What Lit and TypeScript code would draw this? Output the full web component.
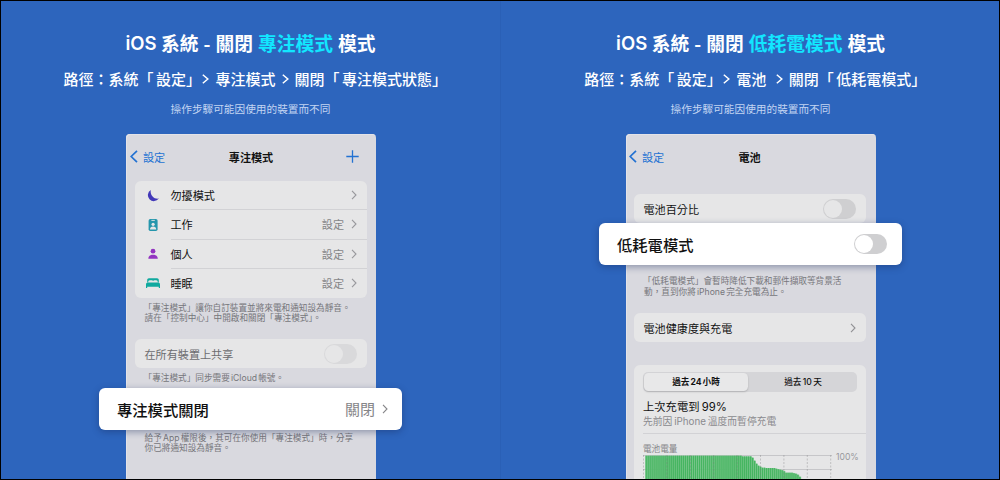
import {LitElement, html, css, svg, nothing} from 'lit';
import {customElement, property} from 'lit/decorators.js';

const chevron = html`
  <svg class="chevron" viewBox="0 0 6 10" width="6" height="10">
    <path d="M1 .8 5 5 1 9.2" fill="none" stroke="currentColor" stroke-width="1.1" />
  </svg>
`;

const icons: Record<string, unknown> = {
  moon: svg`<path fill="#4238b8" d="M4.8 1A6 6 0 1 0 12.8 9.6C8 10.6 3.8 6.2 4.8 1Z" />`,
  badge: svg`
    <rect x="2.6" y="1" width="9" height="12" rx="1.7" fill="#2596ac" />
    <path fill="#e6e6e7" d="M5.4 1.9h3.4v.9H5.4z" />
    <circle cx="7.1" cy="6.3" r="1.6" fill="#e6e6e7" />
    <path fill="#e6e6e7" d="M4 11.4c0-2.1 1.2-3 3.1-3s3.1.9 3.1 3z" />
  `,
  person: svg`
    <circle cx="7" cy="4.2" r="2.4" fill="#9234c0" />
    <path fill="#9234c0" d="M2.3 11.8c0-2.7 1.8-4 4.7-4s4.8 1.3 4.8 4z" />
  `,
  bed: svg`
    <path fill="#10a99f" d="M1.2 6.4V4c0-1 .7-1.7 1.7-1.7h8.2c1 0 1.7.7 1.7 1.7v2.4h-1c0-1.5-.5-2.2-1.6-2.2H8.4c-.7 0-1.1.3-1.3.9-.2-.6-.6-.9-1.3-.9H3.8c-1.1 0-1.6.7-1.6 2.2z" />
    <path fill="#10a99f" d="M0 12V8.6C0 7.5.7 6.6 1.8 6.6h10.4c1.1 0 1.8.9 1.8 2V12h-1.2v-1.3H1.2V12z" />
  `,
};

@customElement('app-toggle')
export class AppToggle extends LitElement {
  static styles = css`
    :host {
      display: block;
      flex: none;
      width: 33px;
      height: 20px;
    }
    .track {
      box-sizing: border-box;
      width: 33px;
      height: 20px;
      padding: 1px;
      border-radius: 10px;
      background: var(--track, #cfcfd1);
    }
    .knob {
      width: 18px;
      height: 18px;
      border-radius: 50%;
      background: var(--knob, #e6e6e7);
    }
  `;
  render() {
    return html`<div class="track"><div class="knob"></div></div>`;
  }
}

@customElement('guide-panel')
export class GuidePanel extends LitElement {
  static styles = css`
    :host {
      display: flex;
      flex-direction: column;
      align-items: center;
      box-sizing: border-box;
      height: 478px;
      padding-top: 27.5px;
      overflow: hidden;
    }
    .title,
    .path,
    .hint {
      flex: none;
      margin-right: 1px;
    }
    .title,
    .path {
      display: flex;
      align-items: center;
      white-space: pre;
      color: #fff;
    }
    .title {
      height: 28px;
      font-size: 18.75px;
      font-weight: 700;
    }
    .title .latin {
      font-family: 'Inter', sans-serif;
      font-size: 18.5px;
      font-weight: 600;
      margin-right: 4.5px;
    }
    .title .dash {
      width: 17px;
      text-align: center;
    }
    .title .accent {
      margin: 0 5px;
      color: #12e6ff;
    }
    .path {
      height: 24px;
      margin-top: 9.5px;
      font-size: 15px;
      font-weight: 500;
    }
    .hint {
      height: 16px;
      margin-top: 11px;
      font-size: 10.67px;
      line-height: 16px;
      color: #c3d5f2;
    }
    .phone {
      box-sizing: border-box;
      width: 250px;
      flex: 1 1 0;
      min-height: 0;
      margin-top: 17px;
      border-radius: 4px 4px 0 0;
      background: #d9d9df;
      box-shadow: inset 1px 1px 0 #e3e3e8;
    }
  `;

  @property() mode = '';

  render() {
    return html`
      <div class="title">
        <span class="latin">iOS</span><span>系統</span><span class="dash">-</span>
        <span>關閉</span><span class="accent">${this.mode}</span><span>模式</span>
      </div>
      <div class="path"><slot name="path"></slot></div>
      <div class="hint">操作步驟可能因使用的裝置而不同</div>
      <div class="phone"><slot></slot></div>
    `;
  }
}

@customElement('app-root')
export class AppRoot extends LitElement {
  static styles = css`
    :host {
      display: grid;
      grid-template-columns: 500px 500px;
      box-sizing: border-box;
      width: 1000px;
      height: 480px;
      border: 1px solid #000;
      overflow: hidden;
      background: #2d65bd;
      color: #111;
      font-family: 'Noto Sans CJK TC', sans-serif;
    }
    .left {
      box-shadow: inset -1px 0 0 #2a60b6;
    }
    .path {
      display: flex;
      align-items: center;
      white-space: pre;
    }
    .path svg {
      flex: none;
      margin: 1px 6px 0;
    }
    .quoted {
      margin: 0 0 0 2.5px;
    }
    .tight {
      margin-right: -4.5px;
    }
    .last {
      margin-right: -9.5px;
    }
    .nav {
      display: grid;
      grid-template-columns: 1fr auto 1fr;
      align-items: center;
      height: 45px;
      padding: 0 4px;
      font-size: 11.1px;
    }
    .back {
      display: flex;
      align-items: center;
      gap: 5px;
      color: #2372d2;
    }
    .nav .name {
      font-weight: 700;
    }
    .right .nav {
      padding: 0 6px 0 3px;
    }
    .plus {
      justify-self: end;
      margin-right: 13px;
    }
    .card {
      box-sizing: border-box;
      width: 232px;
      margin-left: 9px;
      border-radius: 6px;
      background: #e6e6e7;
    }
    .nav + .card {
      margin-top: 2px;
    }
    .right .card {
      margin-left: 8px;
    }
    .right .nav + .card {
      margin-top: 15px;
    }
    .row {
      display: flex;
      align-items: center;
      height: 29.25px;
      font-size: 11.1px;
    }
    .row .icon {
      width: 14px;
      margin: 0 10.5px 0 11px;
    }
    .row .body {
      display: flex;
      flex: 1;
      align-items: center;
      box-sizing: border-box;
      height: 100%;
      padding-right: 10px;
      border-bottom: 1px solid #d2d2d5;
    }
    .row:last-child .body {
      border-bottom-color: transparent;
    }
    .body .value {
      margin-left: auto;
      color: #858588;
    }
    .body .chevron {
      margin-left: 7px;
      color: #98989c;
    }
    .single {
      justify-content: space-between;
      padding: 0 10px 0 9.5px;
      box-sizing: border-box;
    }
    .single .chevron {
      color: #909094;
    }
    .dim {
      color: #6d6d70;
      --track: #d9d9db;
      --knob: #e6e6e7;
    }
    .note {
      padding-left: 18.5px;
      font-size: 8.65px;
      line-height: 10.6px;
      color: #76767b;
      white-space: pre;
      word-spacing: -1.2px;
      font-family: 'Inter', 'Noto Sans CJK TC', sans-serif;
    }
    .right .note {
      padding-left: 18px;
    }
    .open {
      margin-left: -1px;
    }
    .callout {
      display: flex;
      align-items: center;
      justify-content: space-between;
      position: relative;
      box-sizing: border-box;
      width: 302.5px;
      height: 42px;
      margin-left: -27px;
      padding: 0 13.5px 0 18px;
      border-radius: 6px;
      background: #fff;
      box-shadow: 0 2px 7px rgba(20, 40, 90, 0.4);
      font-size: 15.3px;
      font-weight: 500;
      --track: #cfcfd1;
      --knob: #fff;
    }
    .right .callout {
      padding-right: 15px;
    }
    .callout .state {
      display: flex;
      align-items: center;
      gap: 7px;
      font-weight: 400;
      font-size: 15px;
      color: #858588;
    }
    .usage {
      height: 120px;
      border-radius: 6px 6px 0 0;
      padding: 7px 0 0 9px;
      font-family: 'Inter', 'Noto Sans CJK TC', sans-serif;
      word-spacing: -1px;
    }
    .segments {
      display: grid;
      grid-template-columns: 1fr 1fr;
      box-sizing: border-box;
      width: 214px;
      height: 20px;
      padding: 1px;
      border-radius: 5px;
      background: #d5d5d8;
      font-size: 8.6px;
      font-weight: 500;
      line-height: 18px;
      text-align: center;
    }
    .segments .active {
      width: 104px;
      border-radius: 4.5px;
      background: #e8e8e9;
      box-shadow: 0 1px 2px rgba(0, 0, 0, 0.18);
      font-weight: 700;
    }
    .charged {
      margin-top: 8px;
      font-size: 11.3px;
      line-height: 15px;
    }
    .reason {
      font-size: 9.8px;
      line-height: 14px;
      color: #8a8a8e;
    }
    .rule {
      height: 1px;
      margin-top: 4px;
      background: #d2d2d5;
    }
    .level {
      margin-top: 9px;
      font-size: 8.6px;
      line-height: 13px;
      color: #858588;
    }
    .chart {
      display: flex;
      gap: 4px;
      margin-top: -1px;
      font-size: 8.6px;
      line-height: 4px;
      color: #98989c;
    }
    .chart svg {
      flex: none;
    }
  `;

  modes = [
    {icon: 'moon', name: '勿擾模式', value: ''},
    {icon: 'badge', name: '工作', value: '設定'},
    {icon: 'person', name: '個人', value: '設定'},
    {icon: 'bed', name: '睡眠', value: '設定'},
  ];

  // distance of each bar top from the 100% line
  drops = [
    ...Array(49).fill(0),
    ...Array(5).fill(0.7),
    2, 5, 8, 10, 11, 12, 12, 12.3, 12.3, 12.3, 12.3, 12.3, 13, 13.5, 14, 14.5, 15.5, 17, 17, 17, 17, 17.5, 18, 19, 21,
  ];

  arrow() {
    return html`
      <svg width="7" height="10" viewBox="0 0 7 10">
        <path d="M.8.8 5.8 5 .8 9.2" fill="none" stroke="#fff" stroke-width="1.5" />
      </svg>
    `;
  }

  nav(name: string, plus = false) {
    return html`
      <div class="nav">
        <div class="back">
          <svg width="8" height="13" viewBox="0 0 8 13">
            <path d="M7 .8 1.2 6.5 7 12.2" fill="none" stroke="#2372d2" stroke-width="1.7" />
          </svg>
          設定
        </div>
        <div class="name">${name}</div>
        ${plus
          ? html`<svg class="plus" width="13" height="13" viewBox="0 0 13 13">
              <path d="M6.5.3v12.4M.3 6.5h12.4" stroke="#2372d2" stroke-width="1.3" />
            </svg>`
          : nothing}
      </div>
    `;
  }

  chart() {
    const grid = [0, 1, 2, 3, 4, 5, 6, 7, 8].map((i) => 0.5 + i * 23.4);
    return html`
      <svg width="189" height="24" viewBox="0 0 189 24">
        <path d="M0 .5h189M0 14.5h189" stroke="#c6c6c9" />
        ${this.drops.map(
          (d, i) => svg`
            <rect x=${2.5 + i * 1.97} y=${0.7 + d} width="2" height="24" fill="#7ac68b" />
            <rect x=${2.5 + i * 1.97} y=${0.7 + d} width="1.3" height="24" fill="#45b560" />
          `
        )}
        ${grid.map(
          (x) => svg`<path d="M${x} 0v24" stroke="#77777c" stroke-opacity=".35" stroke-dasharray="2 1.5" />`
        )}
      </svg>
      <span>100%</span>
    `;
  }

  render() {
    return html`
      <guide-panel class="left" mode="專注模式">
        <div class="path" slot="path"><span>路徑：系統「</span><span class="quoted">設定</span><span class="tight">」</span>${this.arrow()}<span>專注模式</span>${this.arrow()}<span>關閉「</span><span class="quoted">專注模式狀態</span><span class="last">」</span></div>
        ${this.nav('專注模式', true)}
        <div class="card">
          ${this.modes.map(
            (m) => html`
              <div class="row">
                <svg class="icon" width="14" height="14" viewBox="0 0 14 14">${icons[m.icon]}</svg>
                <div class="body">
                  <span>${m.name}</span>
                  <span class="value">${m.value}</span>
                  ${chevron}
                </div>
              </div>
            `
          )}
        </div>
        <div class="note" style="padding-top:4.5px"><div class="open">「專注模式」讓你自訂裝置並將來電和通知設為靜音。</div>請在「控制中心」中開啟和關閉「專注模式」。</div>
        <div class="card" style="margin-top:15.5px">
          <div class="row single dim">在所有裝置上共享<app-toggle></app-toggle></div>
        </div>
        <div class="note" style="padding-top:4.5px"><div class="open">「專注模式」同步需要 iCloud 帳號。</div></div>
        <div class="callout" style="margin-top:4px">
          專注模式關閉<span class="state">關閉${chevron}</span>
        </div>
        <div class="note" style="padding-top:3px">給予 App 權限後，其可在你使用「專注模式」時，分享
你已將通知設為靜音。</div>
      </guide-panel>

      <guide-panel class="right" mode="低耗電模式">
        <div class="path" slot="path"><span>路徑：系統「</span><span class="quoted">設定</span><span class="tight">」</span>${this.arrow()}<span>電池 </span>${this.arrow()}<span>關閉「</span><span class="quoted">低耗電模式</span><span class="last">」</span></div>
        ${this.nav('電池')}
        <div class="card">
          <div class="row single">電池百分比<app-toggle></app-toggle></div>
        </div>
        <div class="callout">
          低耗電模式<app-toggle></app-toggle>
        </div>
        <div class="note" style="padding-top:11px"><div class="open">「低耗電模式」會暫時降低下載和郵件擷取等背景活</div>動，直到你將 iPhone 完全充電為止。</div>
        <div class="card" style="margin-top:15.5px">
          <div class="row single">電池健康度與充電${chevron}</div>
        </div>
        <div class="card usage" style="margin-top:22.5px">
          <div class="segments"><span class="active">過去 24 小時</span><span>過去 10 天</span></div>
          <div class="charged">上次充電到 99%</div>
          <div class="reason">先前因 iPhone 溫度而暫停充電</div>
          <div class="rule"></div>
          <div class="level">電池電量</div>
          <div class="chart">${this.chart()}</div>
        </div>
      </guide-panel>
    `;
  }
}
